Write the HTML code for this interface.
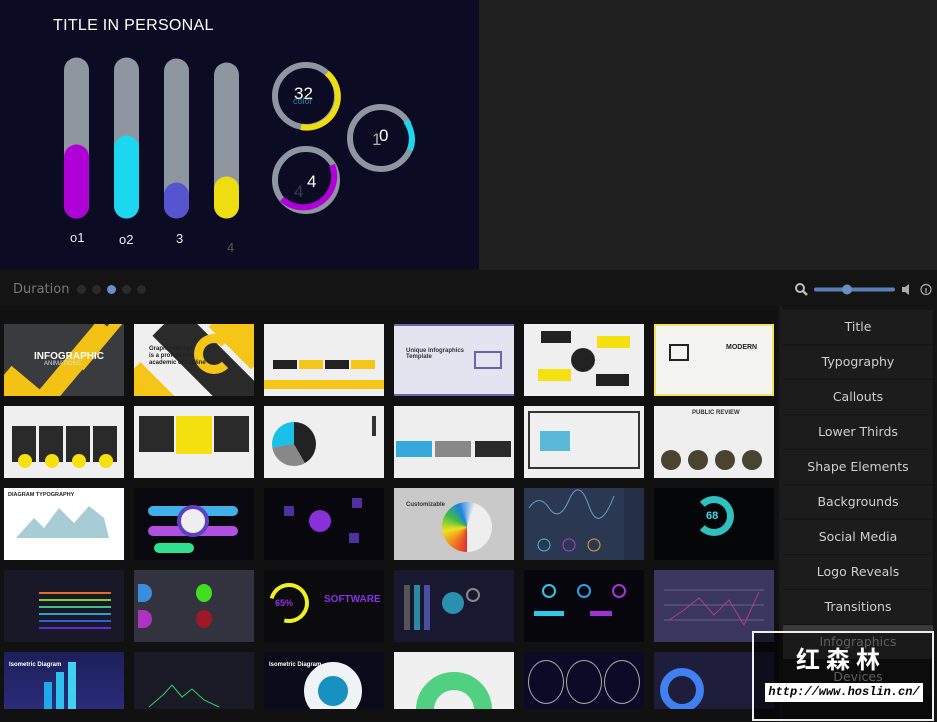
<!DOCTYPE html>
<html><head><meta charset="utf-8"><style>
*{margin:0;padding:0;box-sizing:border-box}
body{width:937px;height:722px;background:#111;position:relative;overflow:hidden;font-family:"Liberation Sans",sans-serif}
.a{position:absolute}
.t{position:absolute;width:120px;height:72px;overflow:hidden}
.r5{height:57px}
.side{position:absolute;left:783px;width:150px;height:34px;background:#1c1c1c;color:#cfcfcf;text-align:center;line-height:34px;font-family:"DejaVu Sans",sans-serif;font-size:12.5px}
</style></head><body>
<div class="a" style="left:479px;top:0;width:458px;height:270px;background:#202020"></div>
<div class="a" style="left:0;top:0;width:479px;height:269px;background:#0b0b24"></div>
<div class="a" style="left:53px;top:17px;color:#fff;font-size:16px;letter-spacing:0.3px">TITLE IN PERSONAL</div>
<svg class="a" style="left:0;top:0" width="479" height="269">
<g stroke-linecap="round" stroke-width="25">
<line x1="76.5" y1="70" x2="76.5" y2="206" stroke="#8e96a0"/><line x1="76.5" y1="157" x2="76.5" y2="206" stroke="#b000d8"/>
<line x1="126.5" y1="70" x2="126.5" y2="206" stroke="#8e96a0"/><line x1="126.5" y1="148" x2="126.5" y2="206" stroke="#1bd7f0"/>
<line x1="176.5" y1="71" x2="176.5" y2="206" stroke="#8e96a0"/><line x1="176.5" y1="195" x2="176.5" y2="206" stroke="#5555d0"/>
<line x1="226.5" y1="75" x2="226.5" y2="206" stroke="#8e96a0"/><line x1="226.5" y1="189" x2="226.5" y2="206" stroke="#eedd10"/>
</g>
<g fill="none" stroke-width="6">
<circle cx="306" cy="96" r="31" stroke="#8e96a0"/>
<path d="M327 73 A31 31 0 0 1 301 127" stroke="#eedd10"/>
<circle cx="306" cy="180" r="31" stroke="#8e96a0"/>
<path d="M332 165 A31 31 0 0 1 282 199" stroke="#b000d8"/>
<circle cx="381" cy="138" r="31" stroke="#8e96a0" stroke-dasharray="180 15"/>
<path d="M406 121 A31 31 0 0 1 410 150" stroke="#1bd7f0"/>
</g>
<text x="294" y="99" fill="#fff" font-size="17" font-family="Liberation Sans">32</text>
<text x="293" y="104" fill="#2a8aa8" font-size="9" font-family="Liberation Sans">color</text>
<text x="307" y="187" fill="#fff" font-size="17" font-family="Liberation Sans">4</text>
<text x="294" y="197" fill="#3a3a58" font-size="17" font-family="Liberation Sans">4</text>
<text x="372" y="145" fill="#aaa" font-size="17" font-family="Liberation Sans">1</text>
<text x="379" y="141" fill="#fff" font-size="17" font-family="Liberation Sans">0</text>
<g fill="#eee" font-size="13" font-family="Liberation Sans"><text x="70" y="242">o1</text><text x="119" y="244">o2</text><text x="176" y="243">3</text><text x="227" y="252" fill="#555">4</text></g>
</svg>
<div class="a" style="left:0;top:270px;width:937px;height:36px;background:#141414"></div>
<div class="a" style="left:13px;top:282px;color:#777;font-size:13px;font-family:'DejaVu Sans',sans-serif">Duration</div>
<div class="a" style="left:77px;top:285px;width:9px;height:9px;border-radius:50%;background:#2a2a2a"></div>
<div class="a" style="left:92px;top:285px;width:9px;height:9px;border-radius:50%;background:#2a2a2a"></div>
<div class="a" style="left:107px;top:285px;width:9px;height:9px;border-radius:50%;background:#6b8ec8"></div>
<div class="a" style="left:122px;top:285px;width:9px;height:9px;border-radius:50%;background:#2a2a2a"></div>
<div class="a" style="left:137px;top:285px;width:9px;height:9px;border-radius:50%;background:#2a2a2a"></div>
<svg class="a" style="left:794px;top:282px" width="145" height="16"><circle cx="6" cy="6" r="4" fill="none" stroke="#bbb" stroke-width="2"/><line x1="9" y1="9" x2="13" y2="13" stroke="#bbb" stroke-width="2.5"/>
<line x1="22" y1="7.5" x2="99" y2="7.5" stroke="#5b7fb5" stroke-width="4" stroke-linecap="round"/><circle cx="53" cy="7.5" r="5" fill="#6f8fc0"/>
<path d="M108 5h3l4-3v11l-4-3h-3z" fill="#aaa"/><circle cx="132" cy="7.5" r="5" fill="none" stroke="#aaa" stroke-width="1.2"/><line x1="132" y1="6" x2="132" y2="11" stroke="#aaa" stroke-width="1.3"/></svg>
<div class="a" style="left:779px;top:306px;width:4px;height:416px;background:#1a1a1a"></div>

<!-- row1 -->
<div class="t" style="left:4px;top:324px;background:#3a3b3e"><div class="a" style="left:60px;top:-10px;width:20px;height:100px;background:#f2c315;transform:rotate(40deg)"></div><div class="a" style="left:90px;top:-10px;width:10px;height:60px;background:#f2c315;transform:rotate(40deg)"></div><div class="a" style="left:-10px;top:50px;width:40px;height:40px;background:#f2c315;transform:rotate(40deg)"></div><div class="a" style="left:30px;top:27px;color:#fff;font-size:10px;font-weight:bold">INFOGRAPHIC</div><div class="a" style="left:40px;top:37px;color:#ddd;font-size:6px">ANIMATIONS</div></div>
<div class="t" style="left:134px;top:324px;background:#efefef"><div class="a" style="left:55px;top:-20px;width:40px;height:120px;background:#2a2a2a;transform:rotate(-45deg)"></div><div class="a" style="left:90px;top:-20px;width:40px;height:60px;background:#f5c518;transform:rotate(-45deg)"></div><div class="a" style="left:-10px;top:45px;width:40px;height:50px;background:#f5c518;transform:rotate(-45deg)"></div><div class="a" style="left:60px;top:10px;width:40px;height:40px;border:9px solid #f5c518;border-radius:50%;border-right-color:transparent"></div><div class="a" style="left:15px;top:22px;font-size:6px;font-weight:bold;color:#222;line-height:7px">Graphic design<br>is a profession,<br>academic discipline</div></div>
<div class="t" style="left:264px;top:324px;background:#efefef"><div class="a" style="left:9px;top:36px;width:24px;height:9px;background:#222"></div><div class="a" style="left:35px;top:36px;width:24px;height:9px;background:#f5c518"></div><div class="a" style="left:61px;top:36px;width:24px;height:9px;background:#222"></div><div class="a" style="left:87px;top:36px;width:24px;height:9px;background:#f5c518"></div><div class="a" style="left:0;top:56px;width:120px;height:9px;background:#f5c518"></div></div>
<div class="t" style="left:394px;top:324px;background:#e4e4f0;border:2px solid #6b64a8;border-left:0;border-right:0"><div class="a" style="left:12px;top:22px;font-size:6px;font-weight:bold;color:#333">Unique Infographics<br>Template</div><div class="a" style="left:80px;top:25px;width:28px;height:18px;border:2px solid #6b64a8"></div></div>
<div class="t" style="left:524px;top:324px;background:#efefef"><div class="a" style="left:17px;top:7px;width:30px;height:12px;background:#222"></div><div class="a" style="left:73px;top:12px;width:33px;height:12px;background:#f5e010"></div><div class="a" style="left:14px;top:45px;width:33px;height:12px;background:#f5e010"></div><div class="a" style="left:72px;top:50px;width:33px;height:12px;background:#222"></div><div class="a" style="left:47px;top:24px;width:24px;height:24px;border-radius:50%;background:#222;border:1px dashed #333"></div></div>
<div class="t" style="left:654px;top:324px;background:#f3f3ef;border:2px solid #f5e060"><div class="a" style="left:13px;top:18px;width:20px;height:17px;border:2px solid #222"></div><div class="a" style="left:70px;top:18px;font-size:7px;font-weight:bold;color:#222">MODERN</div></div>
<!-- row2 -->
<div class="t" style="left:4px;top:406px;background:#efefef"><div class="a" style="left:8px;top:20px;width:24px;height:36px;background:#2a2a2a"></div><div class="a" style="left:35px;top:20px;width:24px;height:36px;background:#2a2a2a"></div><div class="a" style="left:62px;top:20px;width:24px;height:36px;background:#2a2a2a"></div><div class="a" style="left:89px;top:20px;width:24px;height:36px;background:#2a2a2a"></div><div class="a" style="left:14px;top:48px;width:14px;height:14px;border-radius:50%;background:#f5e010"></div><div class="a" style="left:41px;top:48px;width:14px;height:14px;border-radius:50%;background:#f5e010"></div><div class="a" style="left:68px;top:48px;width:14px;height:14px;border-radius:50%;background:#f5e010"></div><div class="a" style="left:95px;top:48px;width:14px;height:14px;border-radius:50%;background:#f5e010"></div></div>
<div class="t" style="left:134px;top:406px;background:#efefef"><div class="a" style="left:5px;top:10px;width:35px;height:36px;background:#2a2a2a"></div><div class="a" style="left:42px;top:10px;width:36px;height:38px;background:#f5e010"></div><div class="a" style="left:80px;top:10px;width:35px;height:36px;background:#2a2a2a"></div></div>
<div class="t" style="left:264px;top:406px;background:#f0f0f0"><div class="a" style="left:8px;top:16px;width:44px;height:44px;border-radius:50%;background:conic-gradient(#222 0 150deg,#888 150deg 260deg,#1ac0e8 260deg)"></div><div class="a" style="left:108px;top:10px;width:4px;height:20px;background:#333"></div></div>
<div class="t" style="left:394px;top:406px;background:#eeeeee"><div class="a" style="left:2px;top:35px;width:36px;height:16px;background:#35a9dc"></div><div class="a" style="left:41px;top:35px;width:36px;height:16px;background:#888"></div><div class="a" style="left:81px;top:35px;width:36px;height:16px;background:#2a2a2a"></div></div>
<div class="t" style="left:524px;top:406px;background:#efefef"><div class="a" style="left:4px;top:5px;width:112px;height:58px;border:2px solid #333"></div><div class="a" style="left:16px;top:25px;width:30px;height:20px;background:#5ab9d6"></div></div>
<div class="t" style="left:654px;top:406px;background:#efefef"><div class="a" style="left:38px;top:4px;font-size:6px;font-weight:bold;color:#333">PUBLIC REVIEW</div><div class="a" style="left:7px;top:44px;width:20px;height:20px;border-radius:50%;background:#4a4330"></div><div class="a" style="left:34px;top:44px;width:20px;height:20px;border-radius:50%;background:#4a4330"></div><div class="a" style="left:61px;top:44px;width:20px;height:20px;border-radius:50%;background:#4a4330"></div><div class="a" style="left:88px;top:44px;width:20px;height:20px;border-radius:50%;background:#4a4330"></div></div>
<!-- row3 -->
<div class="t" style="left:4px;top:488px;background:#fff"><div class="a" style="left:4px;top:4px;font-size:5.5px;font-weight:bold;color:#222">DIAGRAM TYPOGRAPHY</div><svg class="a" width="120" height="72"><path d="M12 50 L30 30 L40 40 L55 20 L70 35 L85 18 L100 30 L105 50Z" fill="#a8ccd6"/></svg></div>
<div class="t" style="left:134px;top:488px;background:#08080e"><div class="a" style="left:14px;top:18px;width:90px;height:10px;border-radius:5px;background:#3fb0e8"></div><div class="a" style="left:14px;top:38px;width:90px;height:10px;border-radius:5px;background:#b050e0"></div><div class="a" style="left:20px;top:55px;width:40px;height:10px;border-radius:5px;background:#30e090"></div><div class="a" style="left:43px;top:17px;width:32px;height:32px;border-radius:50%;background:#eee;border:4px solid #6040c0"></div></div>
<div class="t" style="left:264px;top:488px;background:#07070d"><div class="a" style="left:45px;top:22px;width:22px;height:22px;border-radius:50%;background:#8a30d8"></div><div class="a" style="left:20px;top:18px;width:10px;height:10px;background:#5030a0"></div><div class="a" style="left:88px;top:10px;width:10px;height:10px;background:#5030a0"></div><div class="a" style="left:85px;top:45px;width:10px;height:10px;background:#5030a0"></div></div>
<div class="t" style="left:394px;top:488px;background:#c9c9c9"><div class="a" style="left:48px;top:14px;width:50px;height:50px;border-radius:50%;background:conic-gradient(from 180deg,#e03030,#f08020,#f0e020,#40c040,#2080e0,#eee 200deg,#eee)"></div><div class="a" style="left:12px;top:14px;font-size:6px;font-weight:bold;color:#333">Customizable</div></div>
<div class="t" style="left:524px;top:488px;background:#2a3852"><div class="a" style="left:100px;top:0;width:20px;height:72px;background:#243048"></div><svg class="a" width="120" height="72"><path d="M5 20 Q15 5 25 20 T45 12 T65 18 T90 8" stroke="#6aa0c8" fill="none"/><circle cx="20" cy="57" r="6" fill="none" stroke="#3ac0e8"/><circle cx="45" cy="57" r="6" fill="none" stroke="#b040d0"/><circle cx="70" cy="57" r="6" fill="none" stroke="#e0a030"/></svg></div>
<div class="t" style="left:654px;top:488px;background:#040608"><div class="a" style="left:40px;top:8px;width:40px;height:40px;border-radius:50%;border:7px solid #30c0c0;border-left-color:transparent"></div><div class="a" style="left:52px;top:22px;color:#40d8e8;font-size:11px;font-weight:bold">68</div></div>
<!-- row4 -->
<div class="t" style="left:4px;top:570px;background:#181828"><div class="a" style="left:35px;top:22px;width:72px;height:2px;background:#e07020"></div><div class="a" style="left:35px;top:29px;width:72px;height:2px;background:#80d030"></div><div class="a" style="left:35px;top:36px;width:72px;height:2px;background:#40c080"></div><div class="a" style="left:35px;top:43px;width:72px;height:2px;background:#30a0c0"></div><div class="a" style="left:35px;top:50px;width:72px;height:2px;background:#3060d0"></div><div class="a" style="left:35px;top:57px;width:72px;height:2px;background:#6030d0"></div></div>
<div class="t" style="left:134px;top:570px;background:#333340"><div class="a" style="left:4px;top:14px;width:14px;height:18px;border-radius:0 9px 9px 0;background:#3a8ee0"></div><div class="a" style="left:62px;top:14px;width:16px;height:18px;border-radius:50%;background:#40e020"></div><div class="a" style="left:4px;top:40px;width:14px;height:18px;border-radius:0 9px 9px 0;background:#b030c0"></div><div class="a" style="left:62px;top:40px;width:16px;height:18px;border-radius:50%;background:#a01828"></div></div>
<div class="t" style="left:264px;top:570px;background:#0b0b0e"><div class="a" style="left:5px;top:13px;width:40px;height:40px;border-radius:50%;border:4px solid #f0f020;border-left-color:transparent;transform:rotate(-30deg)"></div><div class="a" style="left:11px;top:28px;color:#9030e0;font-size:9px;font-weight:bold">65%</div><div class="a" style="left:60px;top:24px;color:#8a30e8;font-size:10px;font-weight:bold">SOFTWARE</div></div>
<div class="t" style="left:394px;top:570px;background:#181830"><div class="a" style="left:10px;top:15px;width:6px;height:45px;background:#555"></div><div class="a" style="left:20px;top:15px;width:6px;height:45px;background:#2a8aa0"></div><div class="a" style="left:30px;top:15px;width:6px;height:45px;background:#4a50a0"></div><div class="a" style="left:48px;top:22px;width:22px;height:22px;border-radius:50%;background:#2a90b0"></div><div class="a" style="left:72px;top:18px;width:14px;height:14px;border-radius:50%;border:2px solid #888"></div></div>
<div class="t" style="left:524px;top:570px;background:#06060c"><div class="a" style="left:18px;top:14px;width:14px;height:14px;border-radius:50%;border:2px solid #30c8e8"></div><div class="a" style="left:53px;top:14px;width:14px;height:14px;border-radius:50%;border:2px solid #30a0e8"></div><div class="a" style="left:88px;top:14px;width:14px;height:14px;border-radius:50%;border:2px solid #b030e0"></div><div class="a" style="left:10px;top:41px;width:30px;height:5px;background:#30c8e8"></div><div class="a" style="left:66px;top:41px;width:22px;height:5px;background:#a030d8"></div></div>
<div class="t" style="left:654px;top:570px;background:#3a3660"><svg class="a" width="120" height="72"><path d="M15 50 L30 40 L45 28 L60 45 L75 30 L90 55 L105 22" stroke="#b04080" fill="none"/><g stroke="#6a6090"><line x1="10" y1="20" x2="110" y2="20"/><line x1="10" y1="35" x2="110" y2="35"/><line x1="10" y1="50" x2="110" y2="50"/></g></svg></div>
<!-- row5 -->
<div class="t r5" style="left:4px;top:652px;background:linear-gradient(#1c1f58,#2a2c7a)"><div class="a" style="left:5px;top:10px;color:#fff;font-size:6px;font-weight:bold">Isometric Diagram</div><div class="a" style="left:40px;top:30px;width:8px;height:40px;background:#20a8e8"></div><div class="a" style="left:52px;top:20px;width:8px;height:50px;background:#30c0f0"></div><div class="a" style="left:64px;top:10px;width:8px;height:60px;background:#40d0f0"></div></div>
<div class="t r5" style="left:134px;top:652px;background:#1a1a26"><svg class="a" width="120" height="72"><path d="M15 55 L30 42 L38 33 L48 45 L58 37 L70 48 L85 55" stroke="#30d060" fill="none"/></svg></div>
<div class="t r5" style="left:264px;top:652px;background:#0a0a1a"><div class="a" style="left:5px;top:10px;color:#fff;font-size:6px;font-weight:bold">Isometric Diagram</div><div class="a" style="left:40px;top:10px;width:58px;height:58px;border-radius:50%;border:14px solid #eef4f6;background:#1890c0"></div></div>
<div class="t r5" style="left:394px;top:652px;background:#f0f0f0"><div class="a" style="left:22px;top:20px;width:76px;height:76px;border-radius:50%;border:18px solid #50d080"></div></div>
<div class="t r5" style="left:524px;top:652px;background:#0b0b28"><div class="a" style="left:4px;top:8px;width:36px;height:44px;border-radius:50%;border:1px solid #aaa"></div><div class="a" style="left:42px;top:8px;width:36px;height:44px;border-radius:50%;border:1px solid #aaa"></div><div class="a" style="left:80px;top:8px;width:36px;height:44px;border-radius:50%;border:1px solid #aaa"></div></div>
<div class="t r5" style="left:654px;top:652px;background:#1e1e3c"><div class="a" style="left:6px;top:16px;width:44px;height:44px;border-radius:50%;border:8px solid #4080f0"></div></div>

<!-- sidebar -->
<div class="a" style="left:783px;top:306px;width:154px;height:416px;background:#141414"></div>
<div class="side" style="top:310px">Title</div>
<div class="side" style="top:345px">Typography</div>
<div class="side" style="top:380px">Callouts</div>
<div class="side" style="top:415px">Lower Thirds</div>
<div class="side" style="top:450px">Shape Elements</div>
<div class="side" style="top:485px">Backgrounds</div>
<div class="side" style="top:520px">Social Media</div>
<div class="side" style="top:555px">Logo Reveals</div>
<div class="side" style="top:590px">Transitions</div>
<div class="side" style="top:625px;background:#3a3a3a">Infographics</div>
<div class="side" style="top:660px">Devices</div>
<!-- watermark -->
<div class="a" style="left:752px;top:631px;width:182px;height:90px;border:2px solid #eee;background:rgba(0,0,0,0.55)"></div>
<div class="a" style="left:796px;top:643px;color:#fff;font-size:24px;font-weight:bold;letter-spacing:6px;font-family:'Noto Sans CJK SC',sans-serif;line-height:30px">红森林</div>
<div class="a" style="left:765px;top:683px;width:158px;height:19px;background:#fff;color:#000;font-family:'Liberation Mono',monospace;font-style:italic;font-weight:bold;font-size:12px;line-height:19px;text-align:center;white-space:nowrap;overflow:hidden">http://www.hoslin.cn/</div>
</body></html>
